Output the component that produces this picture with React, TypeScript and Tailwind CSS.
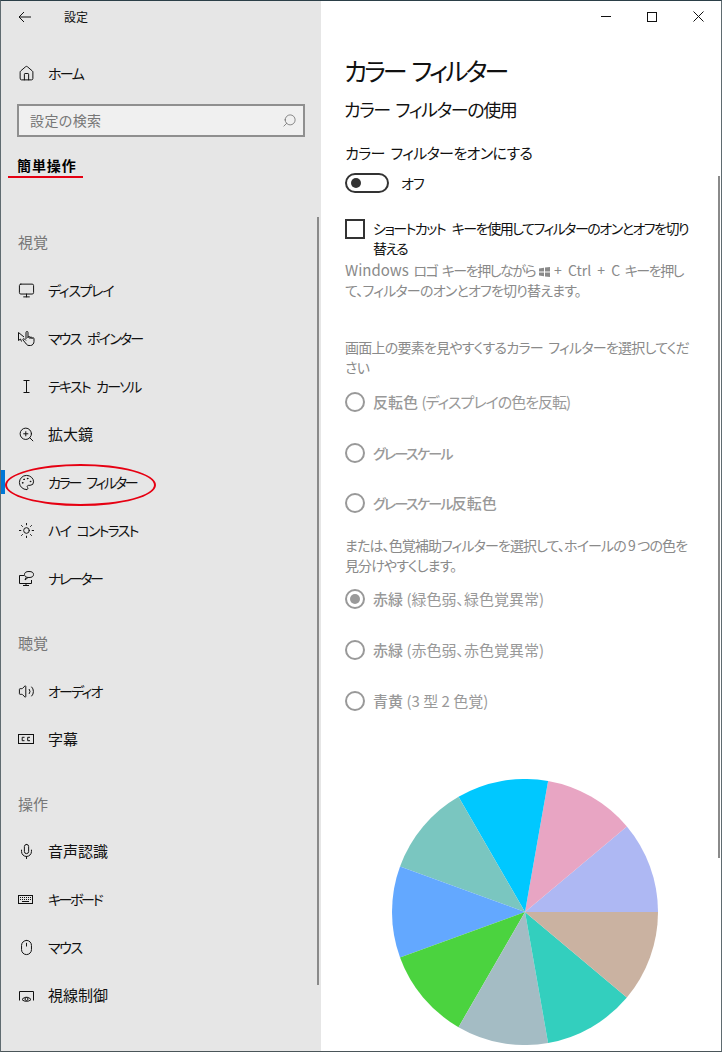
import { ReactNode } from "react";
import { Home, Search, Monitor, ZoomIn, Palette, Sun, Volume2, Mic, Mouse } from "lucide-react";

const font = "font-['Noto_Sans_CJK_JP','Noto_Sans',sans-serif] [font-feature-settings:'palt']";

const icon = { size: 17, strokeWidth: 1.4, className: "text-[#111]" };

const HandIcon = () => (
  <svg width="17" height="17" viewBox="0 0 17 17" fill="none" stroke="#111" strokeWidth="1">
    <path d="M.5 2.500v8l2-1.500 1 2.500" />
    <path d="M.5 2.500 6 7" />
    <path d="M8 9V2.500a1 1 0 0 1 2 0V8M10 7.500a1 1 0 0 1 2 0V9M12 8a1 1 0 0 1 2 0v1M14 8.500a1 1 0 0 1 2 .5v2.500c0 2-1.500 4-3.500 4h-1.500c-1.500 0-2.500-1-3.500-2.500L5 10c-.5-1 .5-1.800 1.500-1L8 10.500" />
  </svg>
);

const CursorIcon = () => (
  <svg width="17" height="17" viewBox="0 0 17 17" fill="none" stroke="#111" strokeWidth="1">
    <path d="M5.500 2.500h6M5.500 14.500h6M8.500 2.500v12" />
  </svg>
);

const NarratorIcon = () => (
  <svg width="17" height="17" viewBox="0 0 17 17" fill="none" stroke="#111" strokeWidth="1">
    <path d="M6 5.500H1.500v8h12V10M5 15.500h6M8 13.500v2" />
    <ellipse cx="11" cy="4.500" rx="4.500" ry="3" />
    <path d="M8 7.500 7 10l3-2.500" />
  </svg>
);

const CcIcon = () => (
  <svg width="17" height="17" viewBox="0 0 17 17" fill="none" stroke="#111" strokeWidth="1">
    <rect x="0.500" y="3.500" width="15" height="9" />
    <path d="M6.500 6.300H4.200v3.400h2.300M12 6.300H9.700v3.400H12" />
  </svg>
);

const KeyboardIcon = () => (
  <svg width="17" height="17" viewBox="0 0 17 17" fill="none" stroke="#111" strokeWidth="1">
    <rect x="0.500" y="4.500" width="14" height="8" />
    <path d="M2 6.500h11M2 8.500h11" strokeDasharray="1 1" />
    <path d="M4 10.500h7" />
  </svg>
);

const GazeIcon = () => (
  <svg width="17" height="17" viewBox="0 0 17 17" fill="none" stroke="#111" strokeWidth="1">
    <path d="M1.500 13.500v-9h14v9" />
    <path d="M4 12.500c2.500-3 6.500-3 9 0-2.500 2.500-6.500 2.500-9 0Z" />
    <circle cx="8.500" cy="12" r="1.500" />
  </svg>
);

const WinLogo = () => (
  <svg width="11" height="10" viewBox="0 0 11 10" fill="#8a8a8a" className="mx-[4px] inline-block align-[-1px]">
    <path d="M0 1.500 5 .7v3.800H0ZM6 .6 11 0v4.500H6ZM0 5.500h5v3.800l-5-.7ZM6 5.500h5V10l-5-.6Z" />
  </svg>
);

const NavItem = ({ icon: glyph, label, active, text }: { icon: ReactNode; label: string; active?: boolean; text: string }) => (
  <div className="relative flex h-12 items-center pl-[17px]">
    {active && <span className="absolute left-0 top-[12px] h-6 w-1 bg-[#0078d7]" />}
    <span className="flex w-[30px] shrink-0 items-center">{glyph}</span>
    <span className={`text-[#111] ${text}`}>{label}</span>
  </div>
);

const SectionLabel = ({ children, className }: { children: string; className: string }) => (
  <div className={`pl-[17px] text-[15px] leading-5 text-[#777] ${className}`}>{children}</div>
);

const Radio = ({ children, checked, className }: { children: ReactNode; checked?: boolean; className?: string }) => (
  <div className={`flex h-5 items-center ${className ?? ""}`}>
    <span className="flex h-5 w-5 shrink-0 items-center justify-center rounded-full border-2 border-[#999]">
      {checked && <span className="h-[10px] w-[10px] rounded-full bg-[#999]" />}
    </span>
    <span className="ml-2 text-[15px] text-[#999]">{children}</span>
  </div>
);

const PIE_COLORS = ["#aeb8f3", "#e8a5c3", "#00c8ff", "#7ac6c0", "#63a8ff", "#4bd33f", "#a4bcc4", "#33cfbe", "#cab2a1"];

const Pie = () => {
  const r = 133;
  const point = (deg: number) => {
    const a = (deg * Math.PI) / 180;
    return `${r + r * Math.cos(a)} ${r - r * Math.sin(a)}`;
  };
  return (
    <svg width="266" height="266" viewBox="0 0 266 266" className="block">
      {PIE_COLORS.map((color, i) => (
        <path key={color} fill={color} d={`M${r} ${r}L${point(i * 40)}A${r} ${r} 0 0 0 ${point((i + 1) * 40)}Z`} />
      ))}
    </svg>
  );
};

export default function App() {
  return (
    <div className={`relative flex h-[1052px] w-[722px] overflow-hidden border border-t-[#2b3f48] border-x-[#5f6b70] border-b-[#4a5559] bg-white ${font}`}>
      <aside className="relative h-full w-[320px] shrink-0 bg-[#e6e6e6]">
        <div className="flex h-[31px] items-center pl-[17px]">
          <svg width="14" height="12" viewBox="0 0 14 12" fill="none" stroke="#111" strokeWidth="1">
            <path d="M13 6H1M6 1 1 6l5 5" />
          </svg>
          <span className="ml-[32px] text-[12px] text-[#111]">設定</span>
        </div>
        <div className="mt-[17px]">
          <NavItem icon={<Home {...icon} />} label="ホーム" text="text-[14px] tracking-[-1.6px]" />
        </div>
        <div className="mx-[16px] mt-[7px] flex h-[33px] w-[288px] items-center justify-between border-2 border-[#8f8f8f] bg-[#f0f0f0] pl-[11px] pr-[6px]">
          <span className="text-[14px] tracking-[0.4px] text-[#777]">設定の検索</span>
          <Search size={15} strokeWidth={1.2} className="-scale-x-100 text-[#666]" />
        </div>
        <div className="mt-[18px] pl-[16px] text-[14px] font-bold leading-5 tracking-[0.9px] text-black">簡単操作</div>
        <SectionLabel className="mb-[14px] mt-[57px]">視覚</SectionLabel>
        <NavItem icon={<Monitor {...icon} />} label="ディスプレイ" text="text-[14px] tracking-[-1.3px]" />
        <NavItem icon={<HandIcon />} label="マウス ポインター" text="text-[14px] tracking-[-1.75px] [word-spacing:5px]" />
        <NavItem icon={<CursorIcon />} label="テキスト カーソル" text="text-[14px] tracking-[-1.75px] [word-spacing:5px]" />
        <NavItem icon={<ZoomIn {...icon} />} label="拡大鏡" text="text-[15px]" />
        <NavItem icon={<Palette {...icon} />} label="カラー フィルター" active text="text-[14px] tracking-[-2.2px] [word-spacing:5px]" />
        <NavItem icon={<Sun {...icon} />} label="ハイ コントラスト" text="text-[14px] tracking-[-1.75px] [word-spacing:5px]" />
        <NavItem icon={<NarratorIcon />} label="ナレーター" text="text-[14px] tracking-[-2.4px]" />
        <SectionLabel className="mb-[14px] mt-[31px]">聴覚</SectionLabel>
        <NavItem icon={<Volume2 {...icon} />} label="オーディオ" text="text-[14px] tracking-[-1.8px]" />
        <NavItem icon={<CcIcon />} label="字幕" text="text-[15px]" />
        <SectionLabel className="mb-[13px] mt-[31px]">操作</SectionLabel>
        <NavItem icon={<Mic {...icon} />} label="音声認識" text="text-[15px]" />
        <NavItem icon={<KeyboardIcon />} label="キーボード" text="text-[14px] tracking-[-2.4px]" />
        <NavItem icon={<Mouse {...icon} />} label="マウス" text="text-[14px] tracking-[-1.3px]" />
        <NavItem icon={<GazeIcon />} label="視線制御" text="text-[15px]" />

        {/* red annotations drawn on top of the screenshot */}
        <span className="absolute left-[7px] top-[175px] h-[2px] w-[75px] bg-[#e60012]" />
        <span className="absolute left-[4px] top-[463px] h-[42px] w-[151px] rounded-[50%] border-2 border-[#e60012]" />
        <span className="absolute left-[316px] top-[216px] h-[768px] w-[2px] bg-[#8a8a8a]" />
      </aside>

      <main className="relative min-w-0 flex-1 pl-[24px]">
        <div className="flex h-[31px] items-center justify-end">
          <svg width="10" height="1" className="mr-[36px]"><rect width="10" height="1" fill="#111" /></svg>
          <svg width="10" height="10" className="mr-[36px]" fill="none" stroke="#111"><rect x="0.500" y="0.500" width="9" height="9" /></svg>
          <svg width="11" height="11" className="mr-[17px]" fill="none" stroke="#111"><path d="M.5.5l10 10M10.500.5l-10 10" /></svg>
        </div>
        <h1 className="-ml-[1px] mt-[19px] text-[25px] font-normal leading-[38px] tracking-[-2.9px] text-[#111] [word-spacing:4px]">カラー フィルター</h1>
        <h2 className="-ml-[1px] mt-[7px] text-[18px] font-normal leading-[26px] tracking-[-1.4px] text-[#111] [word-spacing:3px]">カラー フィルターの使用</h2>
        <div className="mt-[21px] text-[15px] leading-5 tracking-[-0.6px] text-[#111] [word-spacing:3px]">カラー フィルターをオンにする</div>
        <div className="mt-[10px] flex h-5 items-center">
          <span className="flex h-5 w-[44px] items-center rounded-full border-2 border-[#333] pl-[4px]">
            <span className="h-[10px] w-[10px] rounded-full bg-[#333]" />
          </span>
          <span className="ml-3 text-[14px] tracking-[-0.8px] text-[#111]">オフ</span>
        </div>
        <div className="mt-[25px] flex items-start">
          <span className="mt-[1px] h-5 w-5 shrink-0 border-2 border-[#333]" />
          <span className="ml-2 text-[14px] leading-[20px] tracking-[-1.5px] text-[#111] [word-spacing:5px]">
            ショートカット キーを使用してフィルターのオンとオフを切り
            <br />
            替える
          </span>
        </div>
        <p className="mt-[2px] text-[14px] leading-[20px] tracking-[-0.8px] text-[#8a8a8a]">
          <span className="tracking-[-1.5px] [word-spacing:3px]">
            <span className="text-[15px] tracking-normal">Windows</span> ロゴ キーを押しながら
            <WinLogo />
            <span className="tracking-normal">+ Ctrl + C</span> キーを押し
          </span>
          <br />
          て、フィルターのオンとオフを切り替えます。
        </p>
        <p className="mt-[37px] text-[14px] leading-[20px] tracking-[-0.75px] text-[#8a8a8a] [word-spacing:3px]">
          画面上の要素を見やすくするカラー フィルターを選択してくだ
          <br />
          さい
        </p>
        <Radio className="mt-[15px]">
          <span className="font-medium">反転色</span> <span className="tracking-[-1px]">(ディスプレイの色を反転)</span>
        </Radio>
        <Radio className="mt-[31px]">
          <span className="text-[14px] font-medium tracking-[-1.7px]">グレースケール</span>
        </Radio>
        <Radio className="mt-[30px]">
          <span className="text-[14px] font-medium tracking-[-1.7px]">グレースケール</span>
          <span className="font-medium">反転色</span>
        </Radio>
        <p className="mt-[22px] text-[14px] leading-[20px] tracking-[-0.9px] text-[#8a8a8a]">
          または、色覚補助フィルターを選択して、ホイールの 9 つの色を
          <br />
          見分けやすくします。
        </p>
        <Radio className="mt-[14px]" checked>
          <span className="font-medium">赤緑</span> (緑色弱、緑色覚異常)
        </Radio>
        <Radio className="mt-[31px]">
          <span className="font-medium">赤緑</span> (赤色弱、赤色覚異常)
        </Radio>
        <Radio className="mt-[31px]">
          <span className="font-medium">青黄</span> (3 型 2 色覚)
        </Radio>
        <div className="ml-[47px] mt-[68px]">
          <Pie />
        </div>
        <span className="absolute right-[1px] top-[175px] h-[682px] w-[2px] bg-[#8a8a8a]" />
      </main>
    </div>
  );
}
